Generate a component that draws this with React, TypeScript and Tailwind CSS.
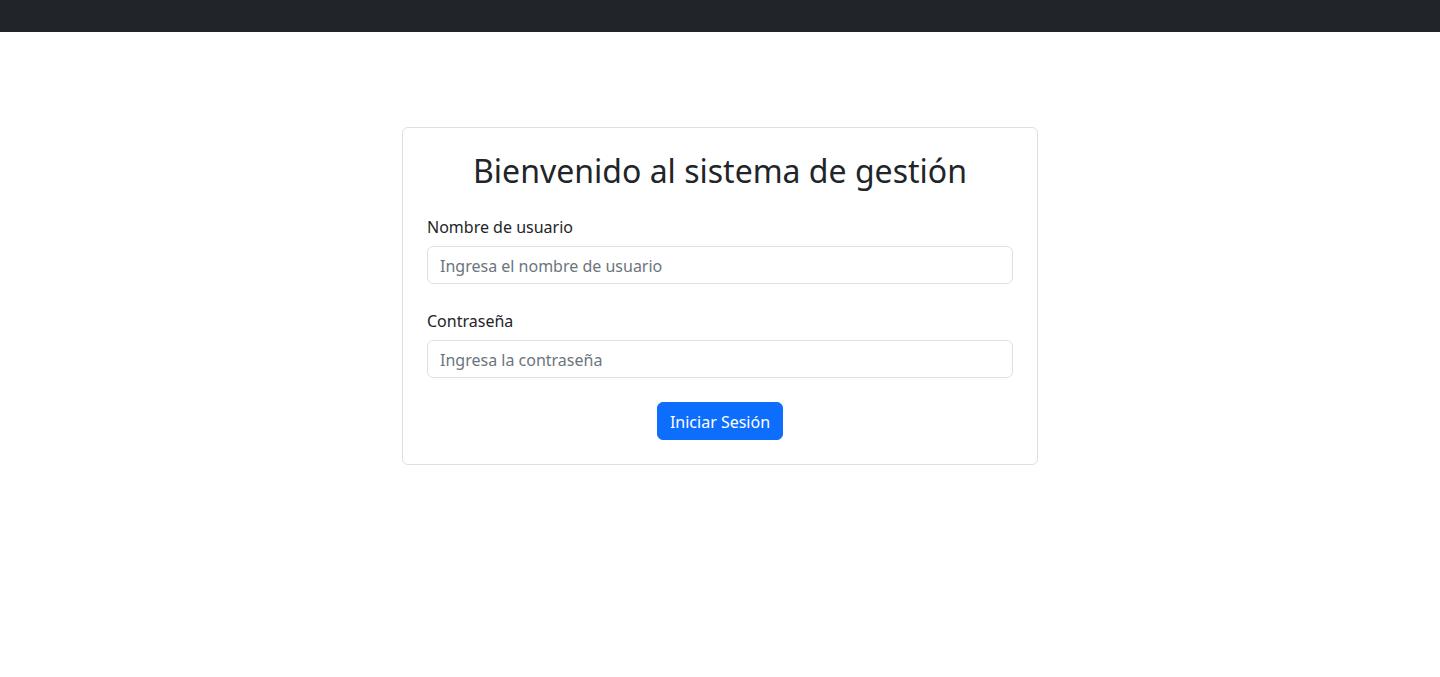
export default function App() {
  return (
    <div className="min-h-screen bg-white text-[#212529]" style={{ fontFamily: '"Noto Sans", "Liberation Sans", sans-serif' }}>
      <nav className="h-8 w-full bg-[#212529]" />
      <div className="mx-auto mt-[95px] w-[636px]">
        <div className="rounded-md border border-[#dfdfdf] bg-white p-6">
          <h2 className="mb-[25px] text-center text-[32px] font-normal leading-[38.4px]">Bienvenido al sistema de gestión</h2>
          <div className="mb-[25px]">
            <label className="mb-[7px] block text-base leading-6">Nombre de usuario</label>
            <input
              type="text"
              placeholder="Ingresa el nombre de usuario"
              className="block h-[38px] w-full rounded-md border border-[#dee2e6] px-3 pt-[7px] pb-[5px] text-base leading-6 text-[#212529] outline-none placeholder:text-[#6c757d]"
            />
          </div>
          <div className="mb-6">
            <label className="mb-[7px] block text-base leading-6">Contraseña</label>
            <input
              type="password"
              placeholder="Ingresa la contraseña"
              className="block h-[38px] w-full rounded-md border border-[#dee2e6] px-3 pt-[7px] pb-[5px] text-base leading-6 text-[#212529] outline-none placeholder:text-[#6c757d]"
            />
          </div>
          <div className="flex justify-center">
            <button className="h-[38px] rounded-md border border-[#0d6efd] bg-[#0d6efd] px-3 pt-[2px] text-base leading-6 text-white">
              Iniciar Sesión
            </button>
          </div>
        </div>
      </div>
    </div>
  );
}
